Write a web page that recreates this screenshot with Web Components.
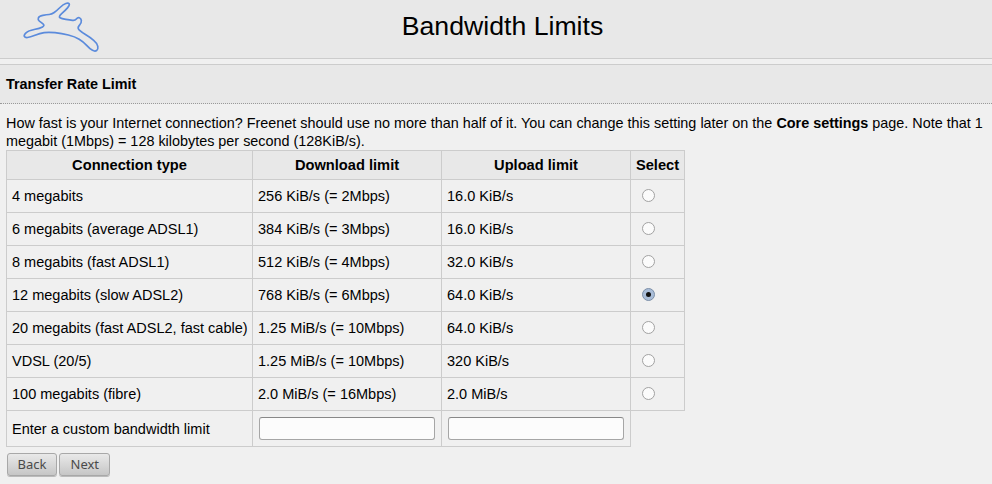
<!DOCTYPE html>
<html><head><meta charset="utf-8">
<style>
html,body{margin:0;padding:0;background:#f0f0f0;overflow:hidden}
body{font:14.4px/16px "Liberation Sans",Arial,sans-serif;color:#000;width:992px;height:484px}
</style></head><body>
<template id="t-header"><style>
:host{display:block;height:58px;background:#e8e8e8;border-bottom:1px solid #ccc;position:relative;text-align:center}
h1{margin:0;font:26.67px/52px "Liberation Sans",Arial,sans-serif;padding-left:13px}
svg{position:absolute;left:0;top:0}
</style><svg width="110" height="56" viewBox="0 0 110 56" fill="none"><path d="" stroke="#5b8bdc" stroke-width="1.7" stroke-linejoin="round"/></svg><h1><slot></slot></h1></template>

<template id="t-section"><style>
:host{display:block;margin-top:5px;height:38px;background:#e8e8e8;border-top:1px solid #ccc;border-bottom:1px dotted #999}
div{padding:11px 6px 0;font-weight:bold;line-height:16px}
</style><div><slot></slot></div></template>

<template id="t-intro"><style>
:host{display:block;padding:10px 6px 0;line-height:18px}
</style><slot></slot></template>

<template id="t-limits"><style>
:host{display:block;padding:0 6px;font-size:14.53px}
.g{display:grid;grid-template-columns:246px 189px 189px 55px;width:679px;grid-template-rows:29px repeat(7,33px) 37px}
</style><div class="g"><slot></slot></div></template>

<template id="t-cell"><style>
:host{display:flex;align-items:center;box-sizing:border-box;border-left:1px solid #ccc;border-top:1px solid #ccc;padding:0 5px;white-space:nowrap}
:host([head]){background:#e8e8e8;font-weight:bold;font-size:14.67px;justify-content:center;padding:0}
:host([mid]){padding:0 0 0 11px}
:host([last]){border-right:1px solid #ccc}
:host([bottom]){border-bottom:1px solid #ccc}
:host([over]){margin-right:-1px}
:host([overb]){margin-bottom:-1px}
</style><slot></slot></template>

<template id="t-radio"><style>
:host{display:block;width:13px;height:13px;margin-top:-2px;box-sizing:border-box;border-radius:50%;border:1px solid #a2a2a2;background:#fbfbfb;position:relative}
:host([on]){background:#a9bdd8;border-color:#7c8fa8}
:host([on])::after{content:"";position:absolute;left:3px;top:3px;width:5px;height:5px;border-radius:50%;background:#111}
</style></template>

<template id="t-input"><style>
:host{display:block;width:176px;height:23px;box-sizing:border-box;background:#fcfcfc;border:1px solid #a6a6a6;border-top-color:#888;border-radius:3px;margin-left:1px}
</style></template>

<template id="t-actions"><style>
:host{display:flex;gap:2px;padding:6px 6px 0 7px}
</style><slot></slot></template>

<template id="t-btn"><style>
:host{display:block;height:23px;box-sizing:border-box;padding:0 9.6px;font:13px/21px "Noto Sans","DejaVu Sans",sans-serif;color:#4a4a4a;border:1px solid #a8a8a8;border-radius:3px;background:linear-gradient(#e9e9e9,#c6c6c6);box-shadow:0 1px 0 #bbb}
:host(:last-child){padding:0 10px 0 10.4px}
</style><slot></slot></template>

<fn-header>Bandwidth Limits</fn-header>
<fn-section>Transfer Rate Limit</fn-section>
<fn-intro>How fast is your Internet connection? Freenet should use no more than half of it. You can change this setting later on the <b>Core settings</b> page. Note that 1 megabit (1Mbps) = 128 kilobytes per second (128KiB/s).</fn-intro>
<fn-limits>
<fn-cell head>Connection type</fn-cell><fn-cell head>Download limit</fn-cell><fn-cell head>Upload limit</fn-cell><fn-cell head last>Select</fn-cell>
<fn-cell>4 megabits</fn-cell><fn-cell>256 KiB/s (= 2Mbps)</fn-cell><fn-cell>16.0 KiB/s</fn-cell><fn-cell mid last><fn-radio></fn-radio></fn-cell>
<fn-cell>6 megabits (average ADSL1)</fn-cell><fn-cell>384 KiB/s (= 3Mbps)</fn-cell><fn-cell>16.0 KiB/s</fn-cell><fn-cell mid last><fn-radio></fn-radio></fn-cell>
<fn-cell>8 megabits (fast ADSL1)</fn-cell><fn-cell>512 KiB/s (= 4Mbps)</fn-cell><fn-cell>32.0 KiB/s</fn-cell><fn-cell mid last><fn-radio></fn-radio></fn-cell>
<fn-cell>12 megabits (slow ADSL2)</fn-cell><fn-cell>768 KiB/s (= 6Mbps)</fn-cell><fn-cell>64.0 KiB/s</fn-cell><fn-cell mid last><fn-radio on></fn-radio></fn-cell>
<fn-cell>20 megabits (fast ADSL2, fast cable)</fn-cell><fn-cell>1.25 MiB/s (= 10Mbps)</fn-cell><fn-cell>64.0 KiB/s</fn-cell><fn-cell mid last><fn-radio></fn-radio></fn-cell>
<fn-cell>VDSL (20/5)</fn-cell><fn-cell>1.25 MiB/s (= 10Mbps)</fn-cell><fn-cell>320 KiB/s</fn-cell><fn-cell mid last><fn-radio></fn-radio></fn-cell>
<fn-cell>100 megabits (fibre)</fn-cell><fn-cell>2.0 MiB/s (= 16Mbps)</fn-cell><fn-cell>2.0 MiB/s</fn-cell><fn-cell mid last overb bottom><fn-radio></fn-radio></fn-cell>
<fn-cell bottom>Enter a custom bandwidth limit</fn-cell><fn-cell bottom><fn-input></fn-input></fn-cell><fn-cell bottom last over><fn-input></fn-input></fn-cell>
</fn-limits>
<fn-actions><fn-btn>Back</fn-btn><fn-btn>Next</fn-btn></fn-actions>
<script>
for(const [tag,id] of [['fn-header','t-header'],['fn-section','t-section'],['fn-intro','t-intro'],['fn-limits','t-limits'],['fn-cell','t-cell'],['fn-radio','t-radio'],['fn-input','t-input'],['fn-actions','t-actions'],['fn-btn','t-btn']]){
  customElements.define(tag,class extends HTMLElement{constructor(){super();this.attachShadow({mode:'open'}).appendChild(document.getElementById(id).content.cloneNode(true));}});
}
const pts=[[23.7,35],[28.3,30.7],[40,28.3],[45,25.5],[41,22.3],[37.7,20],[39,16],[46.7,14.7],[51.7,14.3],[56.7,10.7],[63.3,4.3],[68.3,2.7],[70,5],[65,10.7],[58.3,16.7],[61.7,18.7],[70,20],[75,20.7],[77.7,17.3],[81,18.3],[81.7,22.7],[77,28],[81.7,32.3],[90,37.3],[97.3,43.3],[98.3,49.3],[95,51.7],[90,49],[83.3,41.7],[75,36.7],[61.7,33.3],[48.3,32],[40,33.3],[30,37.3],[25,37.7]];
const mid=(a,b)=>[(a[0]+b[0])/2,(a[1]+b[1])/2].map(n=>n.toFixed(2)).join(' ');
let d='M'+mid(pts[pts.length-1],pts[0]);
pts.forEach((p,i)=>{d+='Q'+p.join(' ')+' '+mid(p,pts[(i+1)%pts.length]);});
document.querySelector('fn-header').shadowRoot.querySelector('path').setAttribute('d',d+'Z');
</script>
</body></html>
